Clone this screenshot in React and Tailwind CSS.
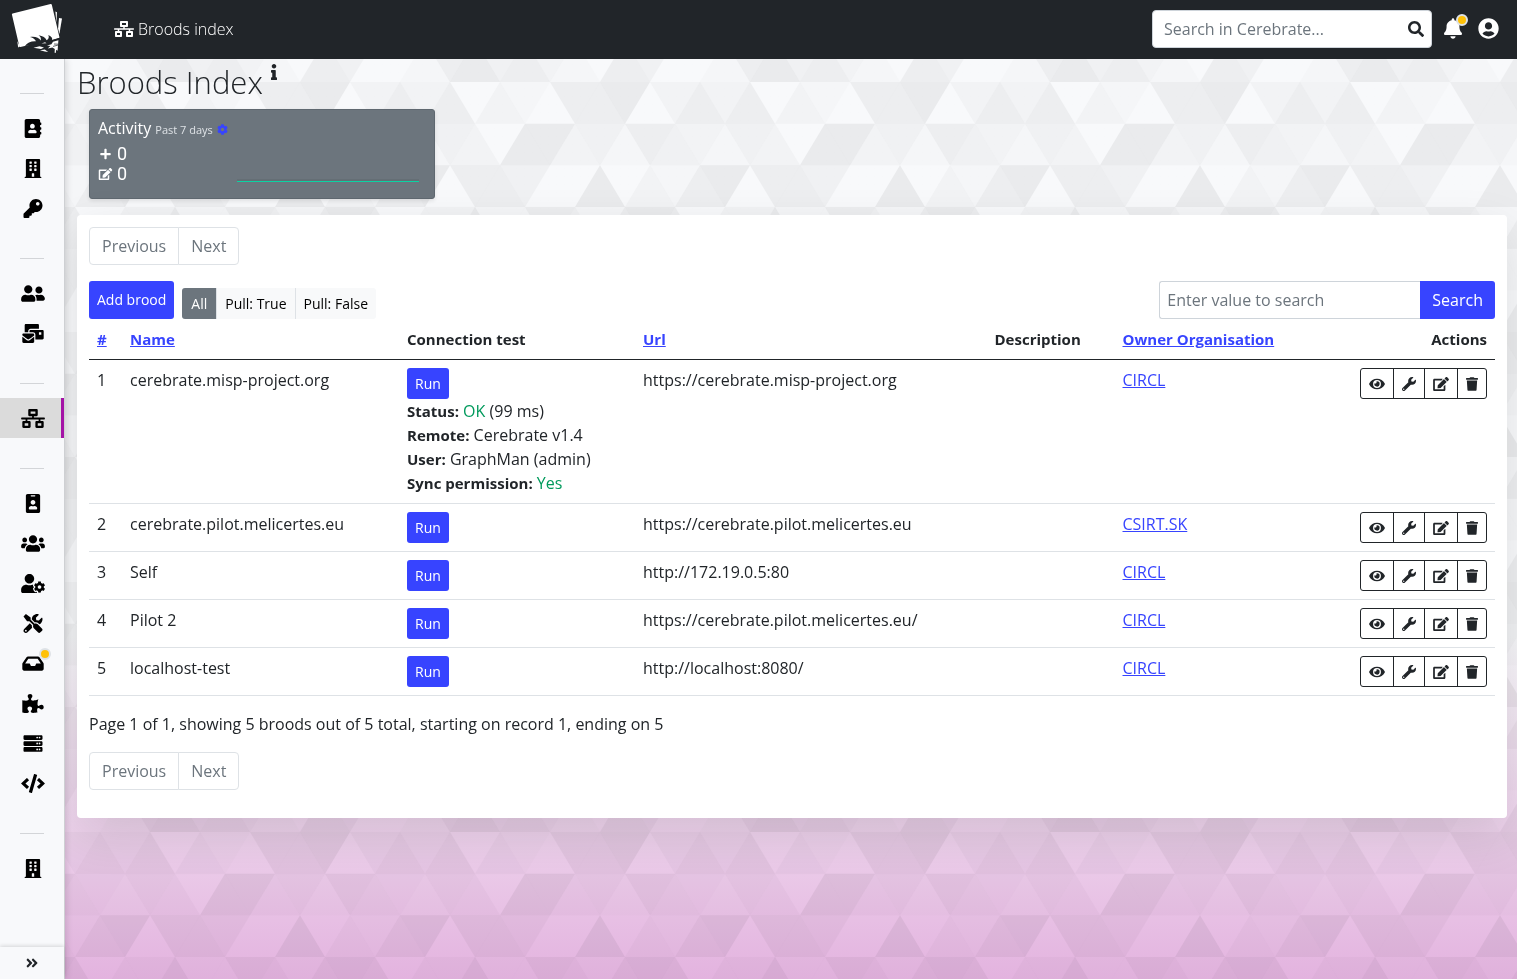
import {
  FaAddressBook, FaAngleDoubleRight, FaBell, FaBuilding, FaCode, FaCog, FaEdit, FaEye, FaIdBadge,
  FaInbox, FaInfo, FaKey, FaMailBulk, FaNetworkWired, FaPlus, FaPuzzlePiece, FaSearch, FaServer,
  FaTools, FaTrash, FaUserCircle, FaUserCog, FaUserFriends, FaUsers, FaWrench,
} from "react-icons/fa";

const ROW_H = 125 / 3;

// Shade levels (0 = lightest) of the triangles in one 300x250 background tile.
const SHADES = [
  { down: [1, 4, 5, 2, 2, 0], up: [0, 4, 0, 4, 4, 2] },
  { down: [5, 3, 4, 2, 3, 0], up: [5, 2, 1, 3, 1, 2] },
  { down: [3, 0, 0, 1, 5, 4], up: [0, 5, 2, 4, 0, 4] },
  { down: [4, 1, 5, 0, 2, 1], up: [1, 3, 4, 4, 2, 5] },
  { down: [2, 4, 1, 3, 0, 4], up: [4, 1, 3, 0, 5, 2] },
  { down: [2, 0, 3, 0, 4, 3], up: [4, 1, 4, 0, 1, 5] },
];

function tileTriangles() {
  const out = [];
  SHADES.forEach((row, r) => {
    const y0 = r * ROW_H;
    const y1 = y0 + ROW_H;
    const odd = r % 2 === 1;
    const add = (a, b, c, level) => {
      if (!level) return;
      [0, -300].forEach((dx) => {
        out.push({
          points: `${a[0] + dx},${a[1]} ${b[0] + dx},${b[1]} ${c[0] + dx},${c[1]}`,
          level,
        });
      });
    };
    for (let i = 0; i < 6; i++) {
      const d = i * 50 + (odd ? 25 : 0);
      add([d, y0], [d + 50, y0], [d + 25, y1], row.down[i]);
      const u = i * 50 + (odd ? 0 : 25);
      add([u, y1], [u + 50, y1], [u + 25, y0], row.up[i]);
    }
  });
  return out;
}

const TRIANGLES = tileTriangles();

function Backdrop() {
  return (
    <div aria-hidden="true" className="fixed inset-0 -z-10 bg-linear-to-b from-[#f8f9fb] from-65% to-[#e3b3df]">
      <svg className="h-full w-full">
        <defs>
          <pattern id="triangles" x="-100" y="82" width="300" height="250" patternUnits="userSpaceOnUse">
            {TRIANGLES.map((t, i) => (
              <polygon key={i} points={t.points} fill="#000" fillOpacity={t.level * 0.011} />
            ))}
          </pattern>
        </defs>
        <rect width="100%" height="100%" fill="url(#triangles)" />
      </svg>
    </div>
  );
}

function Logo() {
  return (
    <svg width="76" height="57" viewBox="0 0 76 57" aria-hidden="true">
      <g fill="#fff">
        <path d="M55.4 11.5l1.6.8-.6 10.5z" />
        <path d="M59 18l3 .6-2.6 15.4-1.3-5.5z" />
        <path d="M17.2 41l1 6.5 1.6-1z" />
        <path d="M12.6 13.4L50.6 4q.9-.2 1.2.7l7.6 32.2q.2.900-.7 1.200L40 43.500 29 45l-8.600 2q-.9 0-1.100-.8L11.900 14.600q-.2-1 .7-1.200z" />
      </g>
      <path
        fill="#212529"
        d="M25 46C27 43 31 41 36 41.300 35 39 32.500 37.500 30 37 35 36 39 37.800 40.800 40.500 41.300 38 40.300 36.300 38.500 35.300 43 35.800 45.600 38 46.600 40.300 48.800 39.300 49.300 37 48.300 35 51.800 36.500 52.800 38.500 52 40.300L58.500 38.300 60 39 59 42 52 43.500 47 45.500 40 44.500 34 46.500 30 48 32 45.300Z"
      />
      <g fill="#fff">
        <path d="M53 41.800l5.400-1.600-.8 10.600-1.400-1-.5 3.200-1.100-.2.2-3.800-2.400-1.400-4.600.8 2.600-2.400-3.400-.6 4.400-1.200z" />
        <path d="M33.500 47.800l6-1.600 4.500 1.400-3 1.400z" />
        <path d="M40 50.200l4.800-.6 3.400 2.300-3.400-.5z" />
        <path d="M41.500 43.600l3.500-1.300 1.500 1z" />
      </g>
      <path d="M53 46.400l5-1.300M54 44l4.200.2" stroke="#212529" strokeWidth="0.7" />
    </svg>
  );
}

const NAV = [
  [["Individuals", FaAddressBook], ["Organisations", FaBuilding], ["Encryption keys", FaKey]],
  [["Sharing groups", FaUserFriends], ["Mailing lists", FaMailBulk]],
  [["Broods", FaNetworkWired]],
  [
    ["Roles", FaIdBadge], ["Users", FaUsers], ["User settings", FaUserCog], ["Local tools", FaTools],
    ["Inbox", FaInbox], ["Meta-field templates", FaPuzzlePiece], ["Instance", FaServer], ["API", FaCode],
  ],
  [["My organisation", FaBuilding]],
];

function Sidebar() {
  return (
    <aside className="sticky top-[59px] z-10 flex h-[calc(100vh-59px)] w-[65px] shrink-0 flex-col border-r border-[#ced0d3] bg-[#f8f9fb] shadow-[2px_0_6px_rgba(0,0,0,0.12)]">
      <nav className="flex-1 overflow-hidden pt-1" aria-label="Main">
        {NAV.map((group, g) => (
          <div key={g}>
            <hr className="mx-auto mt-[30px] mb-[14px] w-6 border-[#d3d5d8]" />
            {group.map(([label, Icon]) => (
              <a
                key={label}
                href="#"
                aria-label={label}
                className={
                  label === "Broods"
                    ? "flex h-10 items-center justify-center border-r-3 border-[#a413a6] bg-[#dbdbdb] pl-1 text-black"
                    : "flex h-10 items-center justify-center pl-px text-black"
                }
              >
                <span className="relative">
                  <Icon className="h-[19px] w-6" />
                  {label === "Inbox" && (
                    <span className="absolute -top-1.5 -right-1.5 size-3 rounded-full border-2 border-[#dee2e6] bg-[#ffc107]" />
                  )}
                </span>
              </a>
            ))}
          </div>
        ))}
      </nav>
      <button type="button" aria-label="Expand menu" className="flex h-8 items-center justify-center text-[#212529] shadow-[0_-1px_4px_rgba(0,0,0,0.15)]">
        <FaAngleDoubleRight className="size-[14px]" />
      </button>
    </aside>
  );
}

function Header() {
  return (
    <header className="sticky top-0 z-20 flex h-[59px] items-center bg-[#212529] pr-[18px] pb-0.5 text-white">
      <a href="#" aria-label="Cerebrate home"><Logo /></a>
      <a href="#" className="ml-[38px] flex items-center gap-1 font-light">
        <FaNetworkWired className="h-4 w-5" />
        Broods index
      </a>
      <form className="mr-3 ml-auto flex h-[38px] w-[280px] items-center rounded border border-[#ced4da] bg-white pr-[7px] pl-[11px]" onSubmit={(e) => e.preventDefault()}>
        <input
          type="search"
          aria-label="Search in Cerebrate"
          placeholder="Search in Cerebrate..."
          className="min-w-0 flex-1 bg-transparent text-[#212529] outline-none placeholder:text-[#6c757d]"
        />
        <button type="submit" aria-label="Search" className="text-[#212529]"><FaSearch className="size-4" /></button>
      </form>
      <button type="button" aria-label="Notifications" className="relative mr-4">
        <FaBell className="h-[21px] w-[18px]" />
        <span className="absolute -top-1 -right-1.5 size-3 rounded-full border-2 border-[#dee2e6] bg-[#ffc107]" />
      </button>
      <button type="button" aria-label="Account"><FaUserCircle className="size-[21px]" /></button>
    </header>
  );
}

function Activity() {
  return (
    <section className="ml-3 flex h-[90px] w-[346px] justify-between rounded-[3px] border border-[#5f6870] bg-[#6c757d] py-2 pr-[15px] pl-2 text-white shadow-[0_2px_4px_rgba(0,0,0,0.1)]">
      <div>
        <h2 className="flex items-baseline gap-1 leading-5">
          Activity
          <span className="text-[11px] text-[#dee2e6]">Past 7 days</span>
          <a href="#" aria-label="Activity settings" className="self-center text-[#3744ff]"><FaCog className="size-[11px]" /></a>
        </h2>
        <p className="mt-1 flex items-center gap-1 font-['Roboto',sans-serif] text-[18px] leading-5"><FaPlus className="h-3 w-[15px]" />0</p>
        <p className="flex items-center gap-1 font-['Roboto',sans-serif] text-[18px] leading-5"><FaEdit className="h-3 w-[15px]" />0</p>
      </div>
      <svg width="182" height="64" className="mt-1" role="img" aria-label="No activity in the past 7 days">
        <path d="M0 58.5H182" stroke="#5b646b" strokeWidth="3" opacity="0.4" />
        <path d="M0 59.5H182" stroke="#0bd3a3" />
      </svg>
    </section>
  );
}

function Pagination() {
  return (
    <nav aria-label="Pagination" className="flex text-[#6c757d]">
      <button type="button" className="h-[38px] rounded-l border border-[#dee2e6] bg-white px-3">Previous</button>
      <button type="button" className="-ml-px h-[38px] rounded-r border border-[#dee2e6] bg-white px-3">Next</button>
    </nav>
  );
}

const ROWS = [
  { id: 1, name: "cerebrate.misp-project.org", url: "https://cerebrate.misp-project.org", owner: "CIRCL", tested: true },
  { id: 2, name: "cerebrate.pilot.melicertes.eu", url: "https://cerebrate.pilot.melicertes.eu", owner: "CSIRT.SK" },
  { id: 3, name: "Self", url: "http://172.19.0.5:80", owner: "CIRCL" },
  { id: 4, name: "Pilot 2", url: "https://cerebrate.pilot.melicertes.eu/", owner: "CIRCL" },
  { id: 5, name: "localhost-test", url: "http://localhost:8080/", owner: "CIRCL" },
];

const ACTIONS = [
  ["View", FaEye, "h-[14px] w-4"],
  ["Open tools", FaWrench, "h-[14px] w-[14px]"],
  ["Edit", FaEdit, "h-[14px] w-4"],
  ["Delete", FaTrash, "h-[14px] w-3"],
];

function SortLink({ children }) {
  return <a href="#" className="text-[#3744ff] underline">{children}</a>;
}

function Result({ label, children }) {
  return (
    <div>
      <b className="text-[15px]">{label}:</b> {children}
    </div>
  );
}

function BroodTable() {
  return (
    <table className="w-full table-fixed text-left leading-6">
      <colgroup>
        <col className="w-[33px]" />
        <col className="w-[277px]" />
        <col className="w-[236px]" />
        <col className="w-[25%]" />
        <col className="w-[128px]" />
        <col />
        <col className="w-[143px]" />
      </colgroup>
      <thead className="text-[15px]">
        <tr className="border-b border-[#212529]">
          <th className="p-2"><SortLink>#</SortLink></th>
          <th className="p-2"><SortLink>Name</SortLink></th>
          <th className="p-2">Connection test</th>
          <th className="p-2"><SortLink>Url</SortLink></th>
          <th className="p-2">Description</th>
          <th className="p-2"><SortLink>Owner Organisation</SortLink></th>
          <th className="p-2 text-right">Actions</th>
        </tr>
      </thead>
      <tbody>
        {ROWS.map((row) => (
          <tr key={row.id} className="border-b border-[#dee2e6] align-top">
            <td className="p-2">{row.id}</td>
            <td className="p-2">{row.name}</td>
            <td className="p-2">
              <button type="button" className="block h-[31px] rounded-[3px] bg-[#3744ff] px-2 text-sm text-white">Run</button>
              {row.tested && (
                <div>
                  <Result label="Status"><span className="text-[#009a5c]">OK</span> (99 ms)</Result>
                  <Result label="Remote">Cerebrate v1.4</Result>
                  <Result label="User">GraphMan (admin)</Result>
                  <Result label="Sync permission"><span className="text-[#009a5c]">Yes</span></Result>
                </div>
              )}
            </td>
            <td className="p-2">{row.url}</td>
            <td className="p-2" />
            <td className="p-2"><a href="#" className="text-[#3744ff] underline">{row.owner}</a></td>
            <td className="p-2">
              <div className="flex justify-end">
                <div className="flex h-[31px] divide-x divide-[#212529] rounded-[3px] border border-[#212529] text-[#212529]">
                  {ACTIONS.map(([label, Icon, size]) => (
                    <button key={label} type="button" aria-label={label} className="px-2">
                      <Icon className={size} />
                    </button>
                  ))}
                </div>
              </div>
            </td>
          </tr>
        ))}
      </tbody>
    </table>
  );
}

export default function App() {
  return (
    <div className="min-h-screen font-['Open_Sans','Noto_Sans',sans-serif] text-base text-[#212529]">
      <Backdrop />
      <Header />
      <div className="flex">
        <Sidebar />
        <main className="min-w-0 flex-1 pt-[5px] pr-[10px] pl-3">
          <h1 className="flex gap-2 text-[31px] leading-9 font-light">
            Broods Index
            <FaInfo className="h-4 w-1.5" />
          </h1>
          <div className="mt-[9px]"><Activity /></div>
          <section className="mt-4 rounded bg-white px-3 pt-3 pb-7 shadow-[0_16px_48px_rgba(0,0,0,0.11)]">
            <Pagination />
            <div className="mt-4 flex items-end">
              <button type="button" className="h-[38px] rounded-[3px] bg-[#3744ff] px-2 text-sm text-white">Add brood</button>
              <div className="ml-2 flex h-[31px] divide-x divide-[#dee2e6] overflow-hidden rounded-[3px] bg-[#f8f9fa] text-sm text-black">
                <button type="button" className="bg-[#6c757d] px-[9px] text-white">All</button>
                <button type="button" className="px-2">Pull: True</button>
                <button type="button" className="px-2">Pull: False</button>
              </div>
              <form className="ml-auto flex h-[38px]" onSubmit={(e) => e.preventDefault()}>
                <input
                  type="text"
                  aria-label="Enter value to search"
                  placeholder="Enter value to search"
                  className="w-[261px] rounded-l-[3px] border border-r-0 border-[#ced4da] bg-white px-[7px] outline-none placeholder:text-[#6c757d]"
                />
                <button type="submit" className="rounded-r-[3px] bg-[#3744ff] px-3 text-white">Search</button>
              </form>
            </div>
            <BroodTable />
            <p className="mt-4 mb-4 leading-6">Page 1 of 1, showing 5 broods out of 5 total, starting on record 1, ending on 5</p>
            <Pagination />
          </section>
        </main>
      </div>
    </div>
  );
}
